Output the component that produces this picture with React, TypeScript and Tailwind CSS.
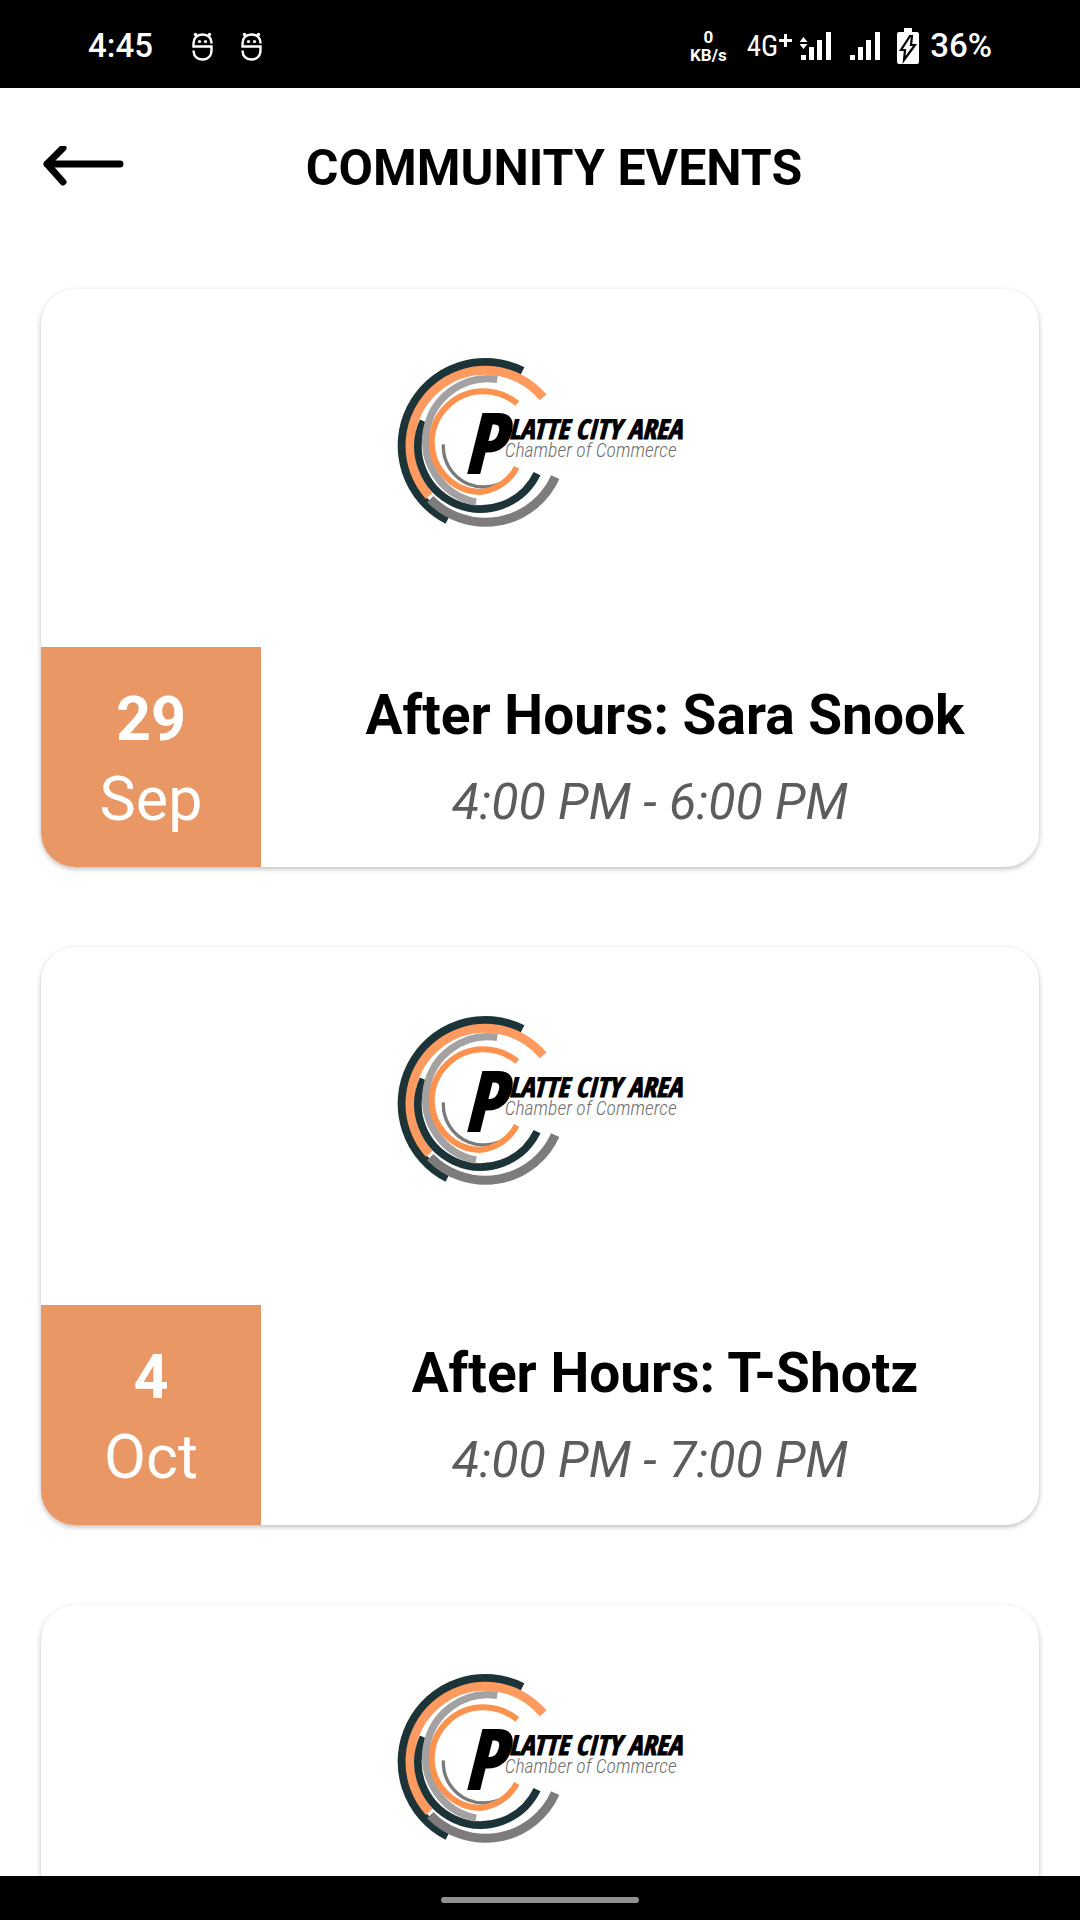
type EventDetails = { day: string; month: string; title: string; time: string };
type CommunityEvent = { id: number; details?: EventDetails };

const events: CommunityEvent[] = [
  { id: 1, details: { day: "29", month: "Sep", title: "After Hours: Sara Snook", time: "4:00 PM - 6:00 PM" } },
  { id: 2, details: { day: "4", month: "Oct", title: "After Hours: T-Shotz", time: "4:00 PM - 7:00 PM" } },
  { id: 3 },
];

// Clockwise arc between two points on a circle, angles found from the given points.
function arc(cx: number, cy: number, r: number, from: [number, number], to: [number, number]) {
  const a = Math.atan2(from[1] - cy, from[0] - cx);
  const b = Math.atan2(to[1] - cy, to[0] - cx);
  const sweep = (b - a + Math.PI * 4) % (Math.PI * 2);
  const large = sweep > Math.PI ? 1 : 0;
  return `M${cx + r * Math.cos(a)} ${cy + r * Math.sin(a)} A${r} ${r} 0 ${large} 1 ${cx + r * Math.cos(b)} ${cy + r * Math.sin(b)}`;
}

function ChamberLogo() {
  return (
    <svg viewBox="0 0 960 600" className="h-[200px] w-[320px]" fill="none" role="img" aria-label="Platte City Area Chamber of Commerce">
      <path d={arc(316, 317, 249, [202, 541], [428, 92])} stroke="#1c3438" strokeWidth="28" />
      <path d={arc(316, 317, 230, [527, 412], [152, 476])} stroke="#7d7b7b" strokeWidth="27" />
      <path d={arc(316, 317, 226, [145, 470], [492, 170])} stroke="#fd9a60" strokeWidth="27" />
      <path d={arc(302, 319, 188, [469, 400], [123, 240])} stroke="#1c3438" strokeWidth="23" />
      <path d={arc(324, 303, 187, [288, 488], [352, 116])} stroke="#a3a1a1" strokeWidth="22" />
      <path d={arc(311, 320, 121, [398, 397], [190, 313])} stroke="#7b7a7a" strokeWidth="10" />
      <path d="M410 382 A138 138 0 0 1 300 456 A150 150 0 0 1 155 305 A155 155 0 0 1 310 154 A165 165 0 0 1 412 190" stroke="#fd924f" strokeWidth="18" />
      <text x="250" y="400" fontSize="248" fill="#000" stroke="#000" strokeWidth="6" className="font-['Open_Sans_Condensed','Roboto',sans-serif] font-bold italic">P</text>
      <text x="386" y="296" fontSize="82" fill="#000" stroke="#000" strokeWidth="3" className="font-['Open_Sans_Condensed','Roboto',sans-serif] font-bold italic">LATTE CITY AREA</text>
      <text x="374" y="351" fontSize="59" fill="#6f6f6f" className="font-['Roboto_Condensed','Roboto',sans-serif] font-light italic">Chamber of Commerce</text>
    </svg>
  );
}

function MaskIcon() {
  return (
    <svg viewBox="0 0 22 30" className="h-[30px] w-[22px]" fill="none" stroke="#fff" strokeWidth="2.400">
      <path d="M19.500 12.500C19.500 6.500 16 3.500 10.500 3.500S1.500 7 1.500 12.500V15.500H19.500V19C19.500 25 16 28.500 10.500 28.500S1.500 25 1.500 19.500" />
      <circle cx="3.500" cy="3.500" r="1.700" fill="#fff" stroke="none" />
      <circle cx="17.500" cy="3.500" r="1.700" fill="#fff" stroke="none" />
      <circle cx="7.500" cy="10.500" r="1.600" fill="#fff" stroke="none" />
      <circle cx="13.500" cy="10.500" r="1.600" fill="#fff" stroke="none" />
    </svg>
  );
}

function SignalBars({ active = false }: { active?: boolean }) {
  return (
    <svg viewBox="0 0 32 28" className="h-7 w-8" fill="#fff">
      <path d="M1 23h5v5H1zM9 15h5v13H9zM17 8h5v20h-5zM26 0h5v28h-5z" />
      {active && <path d="M3.500 5l4 5h-8zM3.500 17l4-5h-8z" />}
    </svg>
  );
}

function StatusBar() {
  return (
    <header className="flex h-[88px] shrink-0 items-center bg-black px-[88px] pt-1 text-white">
      <span className="text-[33px] leading-[40px] font-medium">4:45</span>
      <div className="ml-[39px] flex gap-[27px]">
        <MaskIcon />
        <MaskIcon />
      </div>
      <div className="ml-auto flex items-center">
        <div className="mr-5 text-center text-[17px] leading-[18px] font-bold">
          <div>0</div>
          <div>KB/s</div>
        </div>
        <span className="font-['Roboto_Condensed','Roboto',sans-serif] text-[29px] leading-[40px]">4G</span>
        <svg viewBox="0 0 14 28" className="h-7 w-[14px]" stroke="#fff" strokeWidth="3">
          <path d="M1 8.500h13M7.500 2v13" />
        </svg>
        <div className="ml-2">
          <SignalBars active />
        </div>
        <div className="ml-[17px]">
          <SignalBars />
        </div>
        <svg viewBox="0 0 22 36" className="ml-4 h-9 w-[22px]">
          <path d="M7 0h8v4h5q2 0 2 2v28q0 2-2 2H2q-2 0-2-2V6q0-2 2-2h5z" fill="#fff" />
          <path d="M13 8L4 22h4l-1 10 11-15h-4l1-9z" fill="#fff" stroke="#000" strokeWidth="2.200" />
        </svg>
        <span className="ml-[11px] text-[33px] leading-[40px] font-medium">36%</span>
      </div>
    </header>
  );
}

function EventCard({ details }: { details?: EventDetails }) {
  return (
    <article className="shrink-0 overflow-hidden rounded-[34px] bg-white shadow-[0_2px_5px_rgba(0,0,0,0.26)]">
      <div className="flex h-[358px] justify-center pt-[51px]">
        <ChamberLogo />
      </div>
      {details && (
        <div className="flex h-[220px]">
          <div className="flex w-[220px] flex-col items-center justify-center bg-[#e99865] pt-1 text-[61px] leading-[80px] text-white">
            <span className="font-bold">{details.day}</span>
            <span>{details.month}</span>
          </div>
          <div className="flex flex-1 flex-col items-center pt-[28px] whitespace-nowrap">
            <h2 className="pl-[30px] text-[55px] leading-[80px] font-bold text-black">{details.title}</h2>
            <p className="text-[50px] leading-[94px] text-[#5c5c5c] italic">{details.time}</p>
          </div>
        </div>
      )}
    </article>
  );
}

export default function App() {
  return (
    <div className="flex h-screen flex-col overflow-hidden bg-white font-[Roboto,sans-serif]">
      <StatusBar />
      <div className="flex h-[160px] shrink-0 items-center px-[41px]">
        <button type="button" aria-label="Back" className="w-[84px]">
          <svg viewBox="0 0 84 44" className="h-[44px] w-[84px]" fill="none" stroke="#000" strokeWidth="7" strokeLinecap="round" strokeLinejoin="round">
            <path d="M6 18H79M22 2L6 18L22 36" />
          </svg>
        </button>
        <h1 className="flex-1 pr-[56px] text-center text-[50px] leading-[60px] font-bold text-black">COMMUNITY EVENTS</h1>
      </div>
      <main className="flex min-h-0 flex-1 flex-col gap-20 overflow-hidden px-[41px] pt-[41px]">
        {events.map((event) => (
          <EventCard key={event.id} details={event.details} />
        ))}
      </main>
      <footer className="flex h-[44px] shrink-0 items-center justify-center bg-black pt-1">
        <div className="h-1.5 w-[198px] rounded-full bg-[#918f91]" />
      </footer>
    </div>
  );
}
